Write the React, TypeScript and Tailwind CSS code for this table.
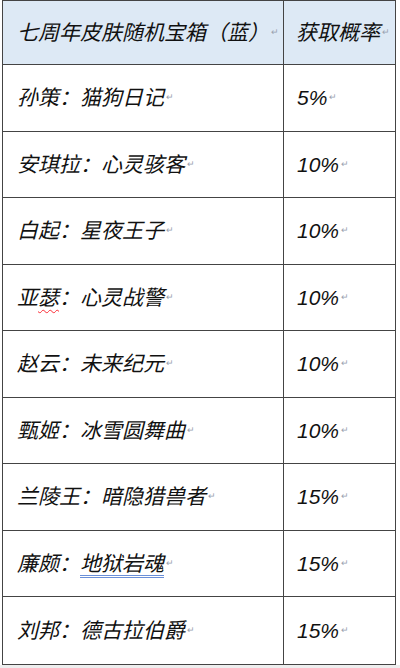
const rows = [
  { name: '孙策：', skin: '猫狗日记', rate: '5%' },
  { name: '安琪拉：', skin: '心灵骇客', rate: '10%' },
  { name: '白起：', skin: '星夜王子', rate: '10%' },
  { name: '亚瑟：', skin: '心灵战警', rate: '10%', wavy: true },
  { name: '赵云：', skin: '未来纪元', rate: '10%' },
  { name: '甄姬：', skin: '冰雪圆舞曲', rate: '10%' },
  { name: '兰陵王：', skin: '暗隐猎兽者', rate: '15%' },
  { name: '廉颇：', skin: '地狱岩魂', rate: '15%', blue: true },
  { name: '刘邦：', skin: '德古拉伯爵', rate: '15%' },
]

const font = { fontFamily: '"Liberation Sans", "Noto Sans CJK SC", sans-serif' }

const Mark = () => <span className="ml-[2px] text-[9px] not-italic text-gray-400">↵</span>

export default function App() {
  return (
    <div className="h-[668px] w-[400px] bg-[#eeeeee]" style={font}>
      <div className="h-[665px] bg-white pl-[2px] pr-[4px]">
        <div className="grid h-full grid-cols-[281px_1fr] grid-rows-[64px_repeat(9,1fr)] border border-[#444] text-[21px] italic text-[#111]">
          <div className="flex items-center border-r border-b border-[#444] bg-[#dde9f5] pl-[14px]">
            七周年皮肤随机宝箱（蓝）
            <Mark />
          </div>
          <div className="flex items-center border-b border-[#444] bg-[#dde9f5] pl-[12px]">
            获取概率
            <Mark />
          </div>
          {rows.map((r, i) => {
            const last = i === rows.length - 1
            return [
              <div
                key={r.name}
                className={`flex items-center border-r border-[#444] pl-[14px] ${last ? '' : 'border-b'}`}
              >
                {r.wavy ? (
                  <>
                    亚<span className="underline decoration-wavy decoration-red-500 decoration-1 underline-offset-4">瑟</span>：
                  </>
                ) : (
                  r.name
                )}
                {r.blue ? (
                  <span className="underline decoration-[#6a8fd8] decoration-double decoration-1 underline-offset-4">
                    {r.skin}
                  </span>
                ) : (
                  r.skin
                )}
                <Mark />
              </div>,
              <div
                key={r.name + 'rate'}
                className={`flex items-center border-[#444] pl-[13px] ${last ? '' : 'border-b'}`}
              >
                {r.rate}
                <Mark />
              </div>,
            ]
          })}
        </div>
      </div>
    </div>
  )
}
